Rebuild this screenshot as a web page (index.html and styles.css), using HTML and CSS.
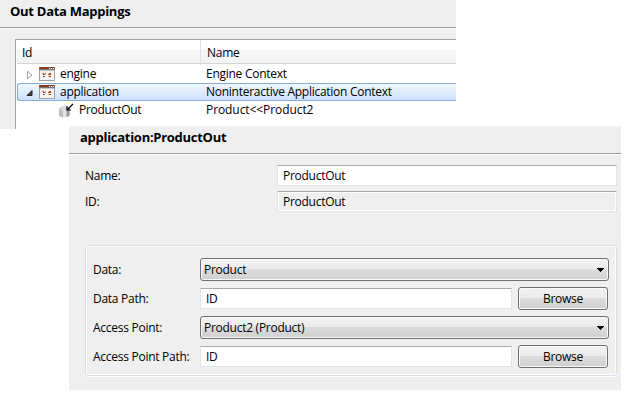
FILE: index.html
```html
<!DOCTYPE html>
<html lang="en">
<head>
<meta charset="utf-8">
<title>Out Data Mappings</title>
<link rel="stylesheet" href="styles.css">
</head>
<body>
<svg class="defs" aria-hidden="true">
  <symbol id="app-icon" viewBox="0 0 16 14">
    <rect x=".5" y=".5" width="15" height="13" fill="#f4f4f1" stroke="#a0a09c"/>
    <path d="M0 0h16v3H0z" fill="#777"/>
    <path d="M1 1h9v1H1z" fill="#9b3418"/>
    <path d="M10 1h1v1h-1zM12 1h1v1h-1zM14 1h1v1h-1z" fill="#fff"/>
    <path d="M0 0h16v1H0z" fill="#7b3f30"/>
    <path d="M1 3h14v1H1z" fill="#c6c6c2"/>
    <path d="M4 6h1v2H4zM5 7h1v1H5zM4 9h2v1H4zM9 7h1v1H9zM10 6h2v2h-2zM10 9h2v1h-2z" fill="#a5492c"/>
    <path d="M3 6h1v1H3zM6 6h1v2H6zM9 9h1v1H9z" fill="#dc9b70"/>
  </symbol>
</svg>
<section class="overview">
  <h1 class="heading">Out Data Mappings</h1>
  <div class="tree">
    <div class="row head"><span class="id">Id</span><span class="name">Name</span></div>
    <div class="row">
      <span class="id"><svg class="arrow" viewBox="0 0 8 10"><path d="M1.5 1.2v7.6L6 5z" fill="#fff" stroke="#a0a0a0"/></svg><svg class="app"><use href="#app-icon"/></svg>engine</span>
      <span class="name">Engine Context</span>
    </div>
    <div class="row selected">
      <span class="id"><svg class="arrow" viewBox="0 0 8 10"><path d="M6 2.5v5H1z" fill="#444" stroke="#222"/></svg><svg class="app"><use href="#app-icon"/></svg>application</span>
      <span class="name">Noninteractive Application Context</span>
    </div>
    <div class="row">
      <span class="id child"><svg class="data" viewBox="0 0 15 15">
        <path d="M0 5.5v6.5c0 3 11 3 11 0V5.5z" fill="#bcbcbc"/>
        <path d="M4 7h3v7H4z" fill="#e4e4e4"/><path d="M8 7h2v6H8z" fill="#999"/>
        <ellipse cx="5.5" cy="5.3" rx="5.5" ry="2" fill="#d8d8d8"/>
        <path d="M14 1 8 7M8 3v4h4" fill="none" stroke="#000" stroke-width="1.2"/>
      </svg>ProductOut</span>
      <span class="name mapping">Product&lt;&lt;Product2</span>
    </div>
  </div>
</section>
<section class="detail">
  <h2 class="heading">application:ProductOut</h2>
  <div class="identity">
    <span>Name:</span><div class="field">ProductOut</div>
    <span>ID:</span><div class="field readonly">ProductOut</div>
  </div>
  <div class="group">
    <span class="label">Data:</span><div class="combo">Product<svg viewBox="0 0 7 4"><path d="M0 0h7v1H6v1H5v1H4v1H3V3H2V2H1V1H0z"/></svg></div>
    <span class="label">Data Path:</span><div class="field">ID</div><button>Browse</button>
    <span class="label">Access Point:</span><div class="combo">Product2 (Product)<svg viewBox="0 0 7 4"><path d="M0 0h7v1H6v1H5v1H4v1H3V3H2V2H1V1H0z"/></svg></div>
    <span class="label">Access Point Path:</span><div class="field">ID</div><button>Browse</button>
  </div>
</section>
</body>
</html>
```
FILE: styles.css
```css
* { box-sizing: border-box; }
body {
  margin: 0;
  width: 632px;
  height: 405px;
  overflow: hidden;
  background: #fff;
  color: #000;
  font: 12px/16px "Open Sans", "Noto Sans", sans-serif;
  letter-spacing: -0.27px;
  white-space: nowrap;
}
.defs { display: none; }
.overview {
  width: 456px;
  height: 129px;
  background: #efefef;
}
.heading {
  margin: 0;
  height: 29px;
  padding: 3px 0 0 10px;
  border-bottom: 1px solid #fff;
  box-shadow: inset 0 -1px #999;
  font-size: 13px;
  line-height: 17px;
  font-weight: 700;
  letter-spacing: -0.28px;
}
.tree {
  margin: 10px 0 0 15px;
  height: 90px;
  padding-left: 1px;
  border-top: 1px solid #a5a5a5;
  border-left: 1px solid #a5a5a5;
  background: #fff;
}
.row {
  display: grid;
  grid-template-columns: 184px 1fr;
  height: 18px;
  line-height: 18px;
}
.row.head {
  height: 24px;
  margin-bottom: 1px;
  line-height: 25px;
  background: linear-gradient(#fff 0 40%, #f7f8fa 41%, #f1f2f4);
  border-bottom: 1px solid #d5d5d5;
}
.head .id { padding-left: 5px; border-right: 1px solid #dedfe1; }
.head .name { padding-left: 6px; }
.id { display: flex; align-items: center; }
.name { padding-left: 5px; }
.mapping { letter-spacing: -0.08px; }
.arrow { width: 8px; height: 10px; margin: 2px 4px 0 9px; }
.app { width: 16px; height: 14px; margin: 0 5px 0 1px; }
.child { padding-left: 42px; }
.data { width: 15px; height: 15px; margin: 0 5px 0 0; }
.selected {
  border: 1px solid #84acdd;
  border-right: 0;
  border-radius: 3px 0 0 3px;
  background: linear-gradient(#f0f7ff, #cde2fc);
  line-height: 16px;
  grid-template-columns: 183px 1fr;
}
.selected .arrow { margin-left: 8px; }
.detail {
  position: absolute;
  left: 69px;
  top: 126px;
  width: 552px;
  height: 264px;
  background: #efefef;
}
.detail .heading { padding-left: 11px; }
.identity {
  display: grid;
  grid-template-columns: 192px 340px;
  row-gap: 5px;
  align-items: center;
  margin: 10px 0 0 16px;
}
.field {
  height: 21px;
  padding: 2px 0 0 5px;
  border: 1px solid #e0e4ec;
  border-top-color: #a8a9ad;
  border-radius: 1px;
  background: #fff;
}
.readonly { background: #efefef; box-shadow: inset 0 0 0 1px #fff; }
.group {
  display: grid;
  grid-template-columns: 107px 312px 6px 90px;
  grid-auto-rows: 24px;
  row-gap: 5px;
  align-items: center;
  width: 532px;
  height: 131px;
  margin: 33px 0 0 16px;
  padding: 11px 0 0 7px;
  border: 1px solid #d5dfe8;
  border-radius: 3px;
  box-shadow: inset 0 0 0 1px #fff, 0 1px #fff;
}
.label { padding-top: 2px; }
.combo {
  grid-column: 2 / 5;
  display: flex;
  align-items: center;
  justify-content: space-between;
  width: 409px;
  height: 23px;
  padding: 2px 4px 0 3px;
}
.combo svg { width: 7px; height: 4px; }
.combo, button {
  border: 1px solid #707070;
  border-radius: 3px;
  background: linear-gradient(#f2f2f2 0 2%, #ebebeb 49%, #dcdcdc 50%, #cfcfcf);
  box-shadow: inset 0 0 0 1px #fafafa;
}
button {
  grid-column: 4;
  height: 23px;
  padding: 2px 0 0;
  color: inherit;
  font: inherit;
  letter-spacing: inherit;
}
```
